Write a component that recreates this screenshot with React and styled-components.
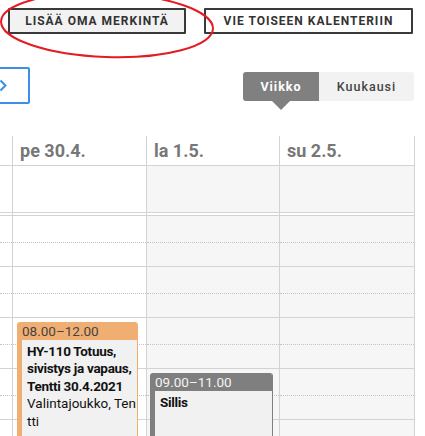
import React from "react";
import styled, { createGlobalStyle } from "styled-components";

const Global = createGlobalStyle`
  html, body {
    margin: 0;
    padding: 0;
    background: #fff;
    overflow: hidden;
  }
  body {
    font-family: Roboto, "Open Sans", sans-serif;
    color: #333;
  }
`;

const Page = styled.div`
  position: relative;
  width: 425px;
  height: 436px;
  overflow: hidden;
`;

const Toolbar = styled.div`
  display: flex;
  gap: 18px;
  padding: 8px 0 0 8px;
`;

const ActionButton = styled.button`
  height: 26px;
  width: ${(p) => p.$w}px;
  box-sizing: border-box;
  border: 2px solid #3a3a3a;
  border-radius: 1px;
  background: ${(p) => (p.$filled ? "#f2f2f2" : "#fff")};
  color: #333;
  font-family: inherit;
  font-weight: 700;
  font-size: 12px;
  letter-spacing: 1px;
  text-transform: uppercase;
  padding: 0;
`;

const Annotation = styled.svg`
  position: absolute;
  left: 0;
  top: 0;
  pointer-events: none;
`;

const NavRow = styled.div`
  display: flex;
  align-items: center;
  justify-content: space-between;
  margin-top: 33px;
  padding-right: 11px;
`;

const ArrowButton = styled.button`
  width: 54px;
  height: 37px;
  margin-left: -24px;
  box-sizing: border-box;
  border: 2px solid #3b8fe8;
  border-radius: 2px;
  background: #fff;
  display: flex;
  align-items: center;
  justify-content: center;
  padding: 0;
`;

const Toggle = styled.div`
  display: flex;
  height: 29px;
  margin-top: 2px;
  border-radius: 3px;
  background: #f2f2f2;
`;

const Tab = styled.div`
  position: relative;
  width: ${(p) => p.$w}px;
  display: flex;
  align-items: center;
  justify-content: center;
  font-size: 12.5px;
  font-weight: ${(p) => (p.$active ? 700 : 500)};
  letter-spacing: 1px;
  color: ${(p) => (p.$active ? "#fff" : "#444")};
  background: ${(p) => (p.$active ? "#808080" : "transparent")};
  border-radius: ${(p) => (p.$active ? "3px 0 0 3px" : "0 3px 3px 0")};

  ${(p) =>
    p.$active &&
    `
    &::after {
      content: "";
      position: absolute;
      left: 50%;
      bottom: -9px;
      margin-left: -9px;
      border-left: 9px solid transparent;
      border-right: 9px solid transparent;
      border-top: 9px solid #808080;
    }
  `}
`;

const Grid = styled.div`
  display: grid;
  grid-template-columns: 12px 134px 133px 135px 1fr;
  margin-top: 32px;
`;

const Column = styled.div`
  position: relative;
  border-left: ${(p) => (p.$line ? "1px solid #d3d3d3" : "none")};
`;

const HeaderCell = styled.div`
  height: 29px;
  border-bottom: 1px solid #d3d3d3;
  padding-left: 7px;
  font-size: 18px;
  font-weight: 700;
  color: #777;
  line-height: 29px;
  white-space: nowrap;
  overflow: hidden;
`;

const AllDayCell = styled.div`
  height: 46px;
  border-bottom: 1px solid #d3d3d3;
  background: ${(p) => (p.$weekend ? "#f6f6f6" : "#fff")};
`;

const Spacer = styled.div`
  height: 2px;
`;

const Hours = styled.div`
  border-top: 1px solid #d3d3d3;
  background: ${(p) => (p.$weekend ? "#f6f6f6" : "#fff")};
`;

const HalfSlot = styled.div`
  height: ${(p) => (p.$first ? 26 : 23)}px;
  border-bottom: 1px ${(p) => (p.$first ? "dotted #c4c4c4" : "solid #d3d3d3")};
`;

const Event = styled.div`
  position: absolute;
  top: ${(p) => p.$top}px;
  left: ${(p) => p.$left}px;
  width: ${(p) => p.$w}px;
  height: ${(p) => p.$h}px;
  box-sizing: border-box;
  border-radius: 3px 3px 0 0;
  overflow: hidden;
  background: #f1f1f1;
  border: 1px solid ${(p) => p.$color};
  border-left-width: 5px;
  border-top: none;
`;

const EventTime = styled.div`
  height: 18px;
  margin-left: -5px;
  margin-right: -1px;
  padding-left: 5px;
  background: ${(p) => p.$color};
  color: ${(p) => (p.$light ? "#f4f4f4" : "#444")};
  font-size: 13.5px;
  line-height: 18px;
`;

const EventBody = styled.div`
  padding: 3px 0 0 5px;
  font-size: 13.5px;
  line-height: 17.4px;
  color: #111;
  word-break: break-all;
`;

const EventTitle = styled.div`
  font-weight: 700;
  word-break: normal;
  letter-spacing: -0.3px;
`;

const days = [
  { label: "pe 30.4.", weekend: false },
  { label: "la 1.5.", weekend: true },
  { label: "su 2.5.", weekend: true },
];

const HourSlots = () =>
  [0, 1, 2, 3, 4, 5].map((h) => (
    <React.Fragment key={h}>
      <HalfSlot $first />
      <HalfSlot />
    </React.Fragment>
  ));

const DayColumn = ({ label, weekend, line, children }) => (
  <Column $line={line}>
    <HeaderCell>{label}</HeaderCell>
    <AllDayCell $weekend={weekend} />
    <Spacer />
    <Hours $weekend={weekend}>
      <HourSlots />
    </Hours>
    {children}
  </Column>
);

export default function App() {
  return (
    <Page>
      <Global />
      <Toolbar>
        <ActionButton $w={178} $filled>
          Lisää oma merkintä
        </ActionButton>
        <ActionButton $w={209}>Vie toiseen kalenteriin</ActionButton>
      </Toolbar>
      <Annotation width="425" height="70" viewBox="0 0 425 70">
        <ellipse
          cx="107"
          cy="25"
          rx="106"
          ry="32"
          fill="none"
          stroke="#e41b23"
          strokeWidth="2"
          transform="rotate(2 107 25)"
        />
      </Annotation>
      <NavRow>
        <ArrowButton aria-label="seuraava">
          <svg width="8" height="13" viewBox="0 0 8 13">
            <path
              d="M1.5 1.5 L6.5 6.5 L1.5 11.5"
              fill="none"
              stroke="#3b8fe8"
              strokeWidth="2"
            />
          </svg>
        </ArrowButton>
        <Toggle>
          <Tab $w={76} $active>
            Viikko
          </Tab>
          <Tab $w={95}>Kuukausi</Tab>
        </Toggle>
      </NavRow>
      <Grid>
        <DayColumn label="" weekend={false} />
        <DayColumn {...days[0]} line>
          <Event $top={186} $left={4} $w={121} $h={220} $color="#f1ae72">
            <EventTime $color="#f1ae72">08.00–12.00</EventTime>
            <EventBody>
              <EventTitle>HY-110 Totuus, sivistys ja vapaus, Tentti 30.4.2021</EventTitle>
              Valintajoukko, Tentti
            </EventBody>
          </Event>
        </DayColumn>
        <DayColumn {...days[1]} line>
          <Event $top={237} $left={3} $w={123} $h={110} $color="#7f7f7f">
            <EventTime $color="#7f7f7f" $light>
              09.00–11.00
            </EventTime>
            <EventBody>
              <EventTitle>Sillis</EventTitle>
            </EventBody>
          </Event>
        </DayColumn>
        <DayColumn {...days[2]} line />
        <Column $line />
      </Grid>
    </Page>
  );
}
